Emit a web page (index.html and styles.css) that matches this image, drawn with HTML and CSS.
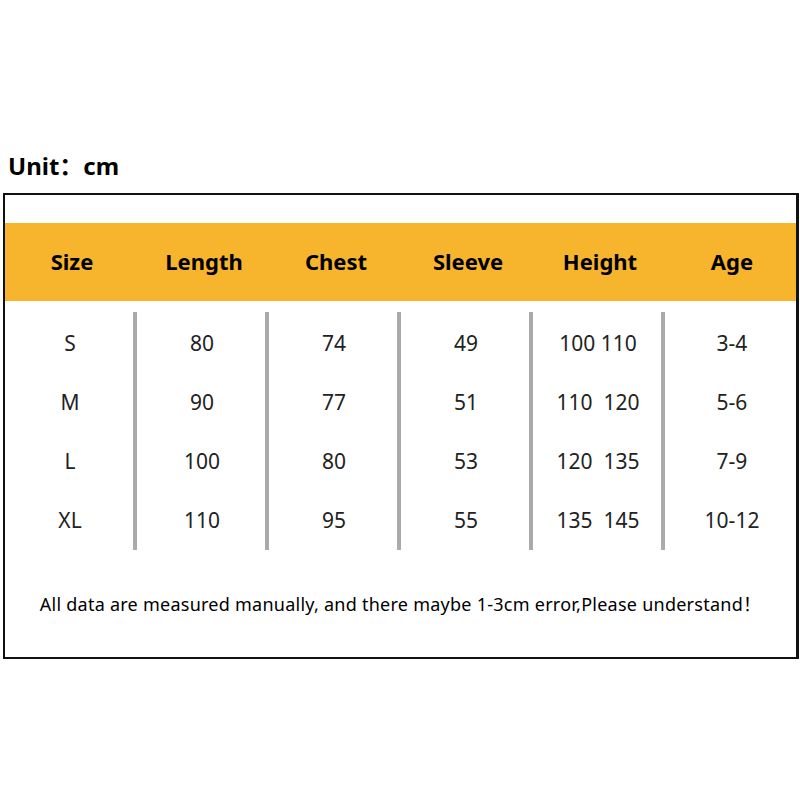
FILE: index.html
```html
<!DOCTYPE html>
<html>
<head>
<meta charset="utf-8">
<link rel="stylesheet" href="styles.css">
</head>
<body>
<div class="page">
  <div class="unit">Unit：cm</div>
  <div class="box">
    <div class="head">
      <div class="hcell">Size</div>
      <div class="hcell">Length</div>
      <div class="hcell">Chest</div>
      <div class="hcell">Sleeve</div>
      <div class="hcell">Height</div>
      <div class="hcell">Age</div>
    </div>
    <div class="body">
      <div class="col sep"><div class="cell">S</div><div class="cell">M</div><div class="cell">L</div><div class="cell">XL</div></div>
      <div class="col sep"><div class="cell">80</div><div class="cell">90</div><div class="cell">100</div><div class="cell">110</div></div>
      <div class="col sep"><div class="cell">74</div><div class="cell">77</div><div class="cell">80</div><div class="cell">95</div></div>
      <div class="col sep"><div class="cell">49</div><div class="cell">51</div><div class="cell">53</div><div class="cell">55</div></div>
      <div class="col sep"><div class="cell">100 110</div><div class="cell">110&nbsp;&nbsp;120</div><div class="cell">120&nbsp;&nbsp;135</div><div class="cell">135&nbsp;&nbsp;145</div></div>
      <div class="col"><div class="cell">3-4</div><div class="cell">5-6</div><div class="cell">7-9</div><div class="cell">10-12</div></div>
    </div>
    <div class="note">All data are measured manually, and there maybe 1-3cm error,Please understand！</div>
  </div>
</div>
</body>
</html>
```

FILE: styles.css
```css
html, body {
  margin: 0;
  padding: 0;
  background: #fff;
}
.page {
  width: 800px;
  height: 800px;
  padding-top: 150px;
  box-sizing: border-box;
  font-family: "Noto Sans", "Noto Sans CJK SC", sans-serif;
}
.unit {
  margin-left: 8px;
  font-size: 24px;
  font-weight: 700;
  line-height: 32px;
  color: #000;
}
.box {
  margin-top: 11px;
  margin-left: 3px;
  width: 796px;
  height: 466px;
  box-sizing: border-box;
  border: 2px solid #111;
  border-right-width: 3px;
  padding-top: 28px;
}
.head {
  display: grid;
  grid-template-columns: repeat(6, 132px);
  height: 78px;
  background: #F7B52D;
}
.hcell {
  display: flex;
  align-items: center;
  justify-content: center;
  padding-left: 2px;
  padding-bottom: 3px;
  font-size: 22px;
  font-weight: 700;
  color: #000;
}
.body {
  display: grid;
  grid-template-columns: repeat(6, 132px);
  margin-top: 11px;
  height: 238px;
}
.col {
  display: flex;
  flex-direction: column;
  padding-top: 1px;
}
.sep {
  border-right: 4px solid #aaa;
}
.cell {
  height: 59px;
  display: flex;
  align-items: center;
  justify-content: center;
  padding-left: 2px;
  font-size: 21px;
  color: #222;
  white-space: nowrap;
}
.note {
  margin-top: 44px;
  text-align: center;
  font-size: 18px;
  line-height: 20px;
  color: #000;
  letter-spacing: 0.25px;
}
```
